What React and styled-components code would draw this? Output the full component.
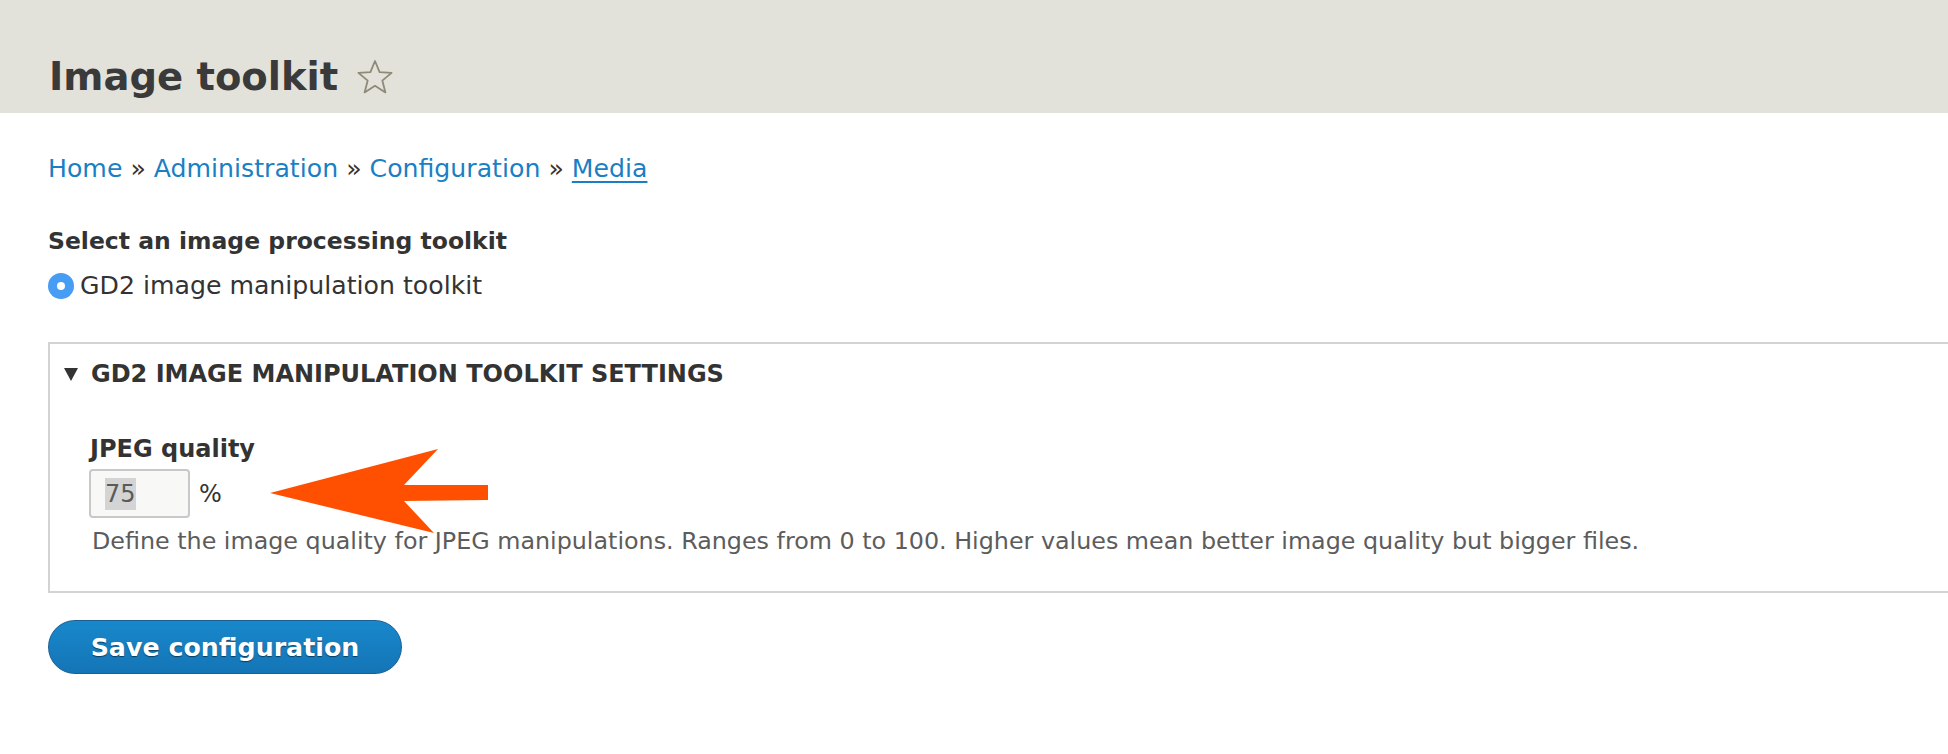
import styled, { createGlobalStyle } from "styled-components";

const GlobalStyle = createGlobalStyle`
  html, body {
    margin: 0;
    padding: 0;
    background: #ffffff;
    font-family: "DejaVu Sans", Roboto, sans-serif;
    color: #333333;
    overflow-x: hidden;
  }
`;

function StarIcon() {
  return (
    <svg width="38" height="36" viewBox="0 0 38 36">
      <path
        d="M19 2 L23.6 13.2 L35.6 13.9 L26.3 21.6 L29.4 33.4 L19 26.8 L8.6 33.4 L11.7 21.6 L2.4 13.9 L14.4 13.2 Z"
        fill="none"
        stroke="#8d8a78"
        strokeWidth="1.8"
        strokeLinejoin="round"
      />
    </svg>
  );
}

// orange annotation arrow pointing at the quality field
function Arrow() {
  return (
    <ArrowLayer width="260" height="110" viewBox="260 440 260 110">
      <polygon
        points="270,493 438,449 404,485 488,485 488,500 404,501 434,533"
        fill="#fe5000"
      />
    </ArrowLayer>
  );
}

function App() {
  return (
    <Page>
      <GlobalStyle />
      <Header>
        <Title>Image toolkit</Title>
        <StarIcon />
      </Header>

      <Content>
        <Breadcrumb>
          <Crumb href="#">Home</Crumb>
          <Sep>»</Sep>
          <Crumb href="#">Administration</Crumb>
          <Sep>»</Sep>
          <Crumb href="#">Configuration</Crumb>
          <Sep>»</Sep>
          <Crumb href="#" $current>Media</Crumb>
        </Breadcrumb>

        <FieldLabel>Select an image processing toolkit</FieldLabel>
        <RadioRow>
          <Radio />
          <RadioText>GD2 image manipulation toolkit</RadioText>
        </RadioRow>

        <Settings>
          <Summary>
            <Triangle />
            <SummaryText>GD2 image manipulation toolkit settings</SummaryText>
          </Summary>

          <QualityLabel>JPEG quality</QualityLabel>
          <InputRow>
            <NumberBox>
              <Selected>75</Selected>
            </NumberBox>
            <Unit>%</Unit>
          </InputRow>
          <Description>
            Define the image quality for JPEG manipulations. Ranges from 0 to 100. Higher values mean better image quality but bigger files.
          </Description>
        </Settings>

        <SaveButton>Save configuration</SaveButton>
      </Content>

      <Arrow />
    </Page>
  );
}

const Page = styled.div`
  position: relative;
  min-height: 754px;
`;

const Header = styled.header`
  display: flex;
  align-items: center;
  gap: 18px;
  height: 113px;
  box-sizing: border-box;
  padding: 57px 0 17px 49px;
  background: #e3e2da;
`;

const Title = styled.h1`
  margin: 0;
  font-size: 38.5px;
  line-height: 39px;
  font-weight: 700;
  color: #3a3a3a;
`;

const Content = styled.main`
  padding: 0 0 0 48px;
`;

const Breadcrumb = styled.nav`
  margin-top: 43px;
  font-size: 25.2px;
  line-height: 25px;
  display: flex;
  gap: 8px;
`;

const Crumb = styled.a`
  color: #1a7fc4;
  text-decoration: ${(p) => (p.$current ? "underline" : "none")};
  text-underline-offset: 4px;
  text-decoration-thickness: 2px;
`;

const Sep = styled.span`
  color: #333333;
`;

const FieldLabel = styled.div`
  margin-top: 48px;
  font-size: 23.5px;
  line-height: 24px;
  font-weight: 700;
`;

const RadioRow = styled.div`
  margin-top: 20px;
  display: flex;
  align-items: center;
  gap: 6px;
`;

const Radio = styled.span`
  width: 26px;
  height: 26px;
  border-radius: 50%;
  background: #479cf3;
  display: flex;
  align-items: center;
  justify-content: center;
  &::after {
    content: "";
    width: 8px;
    height: 8px;
    border-radius: 50%;
    background: #ffffff;
  }
`;

const RadioText = styled.span`
  font-size: 25.2px;
  line-height: 24px;
`;

const Settings = styled.section`
  margin-top: 43px;
  border: 2px solid #d3d3d3;
  border-right: 0;
  padding: 18px 0 38px 14px;
`;

const Summary = styled.div`
  display: flex;
  align-items: center;
  gap: 13px;
`;

const Triangle = styled.span`
  width: 0;
  height: 0;
  border-left: 7px solid transparent;
  border-right: 7px solid transparent;
  border-top: 13px solid #333333;
`;

const SummaryText = styled.span`
  font-size: 24px;
  line-height: 24px;
  font-weight: 700;
  text-transform: uppercase;
`;

const QualityLabel = styled.div`
  margin: 51px 0 0 26px;
  font-size: 24px;
  line-height: 24px;
  font-weight: 700;
`;

const InputRow = styled.div`
  margin: 8px 0 0 25px;
  display: flex;
  align-items: center;
  gap: 9px;
`;

const NumberBox = styled.div`
  width: 101px;
  height: 49px;
  box-sizing: border-box;
  border: 2px solid #c8c8c8;
  border-radius: 4px;
  background: #f8f8f6;
  display: flex;
  align-items: center;
  padding-left: 14px;
`;

const Selected = styled.span`
  background: #d4d4d4;
  color: #5a5a5a;
  font-size: 24px;
  line-height: 32px;
`;

const Unit = styled.span`
  font-size: 24px;
  line-height: 24px;
`;

const Description = styled.div`
  margin: 12px 0 0 28px;
  font-size: 23.8px;
  line-height: 23px;
  color: #5c5c5c;
`;

const SaveButton = styled.button`
  margin-top: 27px;
  width: 354px;
  height: 54px;
  border-radius: 27px;
  border: 1px solid #1d5f95;
  background: linear-gradient(#1888cb, #1475b6);
  color: #ffffff;
  font-family: "DejaVu Sans", Roboto, sans-serif;
  font-size: 25.3px;
  font-weight: 700;
  text-shadow: 0 1px 1px rgba(0, 0, 0, 0.5);
  cursor: pointer;
`;

const ArrowLayer = styled.svg`
  position: absolute;
  left: 260px;
  top: 440px;
`;

export default App;
